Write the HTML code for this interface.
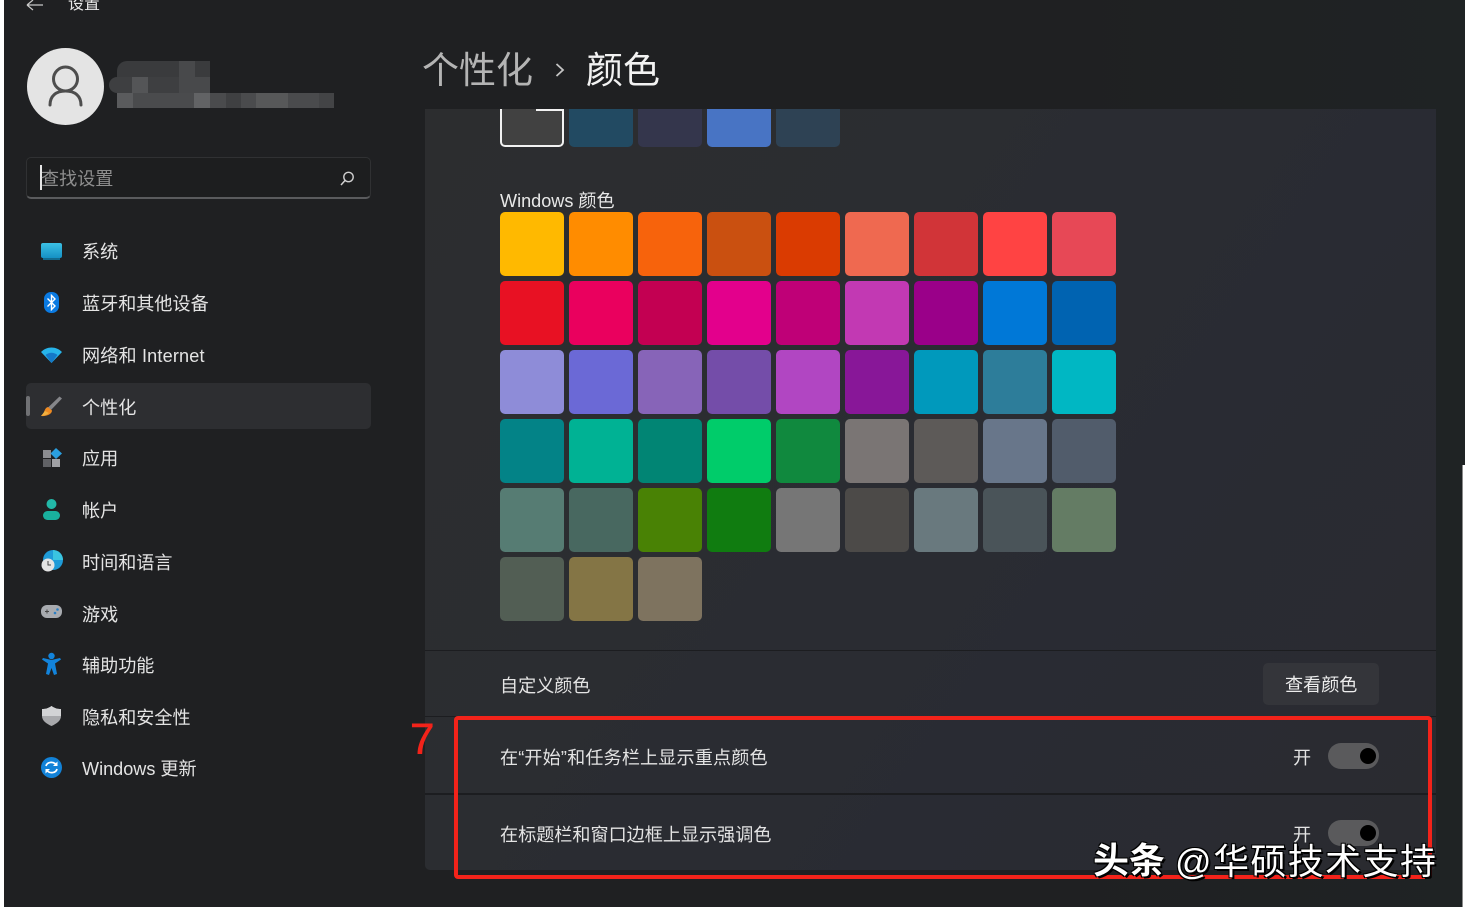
<!DOCTYPE html>
<html lang="zh"><head><meta charset="utf-8"><style>
html,body{margin:0;padding:0;background:#fff}
body{width:1465px;height:907px;position:relative;overflow:hidden;font-family:"Liberation Sans","Noto Sans CJK SC",sans-serif;color:#e6e6e6}
.a{position:absolute}
.t{position:absolute;white-space:nowrap;font-size:18.1px;line-height:24px;font-family:"Liberation Sans","Noto Sans CJK SC",sans-serif}
.s{position:absolute;width:64.3px;height:64.3px;border-radius:5px}
.n{left:82px;color:#e4e4e4}
.l{letter-spacing:.17px}
svg{position:absolute;overflow:visible}
</style></head><body>
<div class="a" style="left:4px;top:0;width:1461px;height:907px;background:linear-gradient(90deg,#1f2022 0%,#1f2022 70%,#1f2324 100%)"></div>
<div class="a" style="left:1463px;top:465px;width:2px;height:442px;background:#fff"></div>
<div class="a" style="left:1462px;top:465px;width:1px;height:442px;background:#8a8a8a"></div>

<svg style="left:26px;top:0" width="18" height="12"><path d="M1 5H17M1 5L7 0M1 5L7 10" fill="none" stroke="#c8c8c8" stroke-width="1.2"/></svg>
<div class="t" style="left:68px;top:-7px;font-size:16px;color:#e8e8e8">设置</div>

<div class="a" style="left:27px;top:48px;width:77px;height:77px;border-radius:50%;background:#e4e4e4"></div>
<svg style="left:27px;top:48px" width="77" height="77"><circle cx="38.500" cy="31" r="12" fill="none" stroke="#4d4d4d" stroke-width="3"/><path d="M23 57C23 48 29 43 38.500 43S54 48 54 57" fill="none" stroke="#4d4d4d" stroke-width="3" stroke-linecap="round"/></svg>

<div class="a" style="left:117px;top:61px;width:93px;height:16px;background:#3a3b3d;border-radius:10px 0 0 0"></div>
<div class="a" style="left:179px;top:61px;width:16px;height:16px;background:#48494b"></div>
<div class="a" style="left:109px;top:77px;width:101px;height:16px;background:#3e3f41;border-radius:8px 0 0 8px"></div>
<div class="a" style="left:132px;top:77px;width:16px;height:16px;background:#545557"></div>
<div class="a" style="left:179px;top:77px;width:31px;height:16px;background:#48494b"></div>
<div class="a" style="left:117px;top:93px;width:217px;height:15px;background:#4a4b4d"></div>
<div class="a" style="left:117px;top:93px;width:16px;height:15px;background:#5a5b5d"></div>
<div class="a" style="left:194px;top:93px;width:16px;height:15px;background:#626365"></div>
<div class="a" style="left:226px;top:93px;width:15px;height:15px;background:#3f4042"></div>
<div class="a" style="left:256px;top:93px;width:32px;height:15px;background:#575859"></div>
<div class="a" style="left:319px;top:93px;width:15px;height:15px;background:#434446"></div>

<div class="a" style="left:26px;top:157px;width:345px;height:42px;box-sizing:border-box;background:#1d1e1f;border:1px solid #303133;border-bottom:2px solid #5a5b5d;border-radius:5px"></div>
<div class="a" style="left:40px;top:165px;width:2px;height:25px;background:#e6e6e6"></div>
<div class="t" style="left:41px;top:167px;color:#8e8e8e">查找设置</div>
<svg style="left:340px;top:171px" width="15" height="15"><circle cx="8.500" cy="6" r="4.700" fill="none" stroke="#d0d0d0" stroke-width="1.400"/><path d="M5 9.500L1 14" stroke="#d0d0d0" stroke-width="1.500"/></svg>

<div class="a" style="left:26px;top:383px;width:345px;height:46px;background:#2d2e31;border-radius:5px"></div>
<div class="a" style="left:26px;top:396px;width:4px;height:20px;background:#707174;border-radius:2px"></div>

<div class="a" style="left:41px;top:243px;width:21px;height:15px;background:linear-gradient(#3bc0e4,#1590c4);border-radius:2px"></div>
<div class="a" style="left:43px;top:258px;width:17px;height:2px;background:#126a8e"></div>
<svg style="left:44px;top:292px" width="15" height="21"><rect width="15" height="21" rx="7" fill="#0a7ae2"/><path d="M3.500 6.500L11 14L7.500 17.500V3.500L11 7L3.500 14.500" fill="none" stroke="#fff" stroke-width="1.400"/></svg>
<svg style="left:41px;top:347px" width="21" height="16"><path d="M0 5C6 -1 15 -1 21 5L10.500 16Z" fill="#27b4ea"/><path d="M4.500 8C8 5 13 5 16.500 8L10.500 16Z" fill="#1478c8"/></svg>
<svg style="left:41px;top:395px" width="21" height="22"><path d="M18.500 1.500L21 3.500L10 15L7 12.500Z" fill="#85868a"/><path d="M7 12C3 13 4 18 0 21C6 21.500 11 19 11 15.500Z" fill="#ee8a22"/><path d="M0 21C3 20.500 6 20 8 18L4 16Z" fill="#f0b040"/></svg>
<svg style="left:42px;top:448px" width="21" height="20"><rect x="1" y="2" width="8" height="8" fill="#8b8c90"/><rect x="1" y="11" width="8" height="8" fill="#606165"/><rect x="10" y="11" width="8" height="8" fill="#a0a1a5"/><path d="M14 0L20 5.500L14 11L8.500 5.500Z" fill="#2a9fe0"/></svg>
<svg style="left:43px;top:499px" width="17" height="21"><circle cx="8.500" cy="5" r="5" fill="#22b8a8"/><rect y="12" width="17" height="9" rx="4.500" fill="#19b09e"/></svg>
<svg style="left:41px;top:550px" width="22" height="22"><circle cx="12" cy="10" r="10" fill="#1f9bd8"/><path d="M12 0A10 10 0 0 1 22 10H12Z" fill="#3ac4e0"/><circle cx="7" cy="15" r="6.500" fill="#e4e4e4"/><path d="M7 11V15H10" fill="none" stroke="#444" stroke-width="1"/></svg>
<svg style="left:41px;top:605px" width="21" height="14"><rect width="21" height="13" rx="6" fill="#a8abb0"/><path d="M4 6.500H8M6 4.500V8.500" stroke="#444" stroke-width="1"/><circle cx="14" cy="8" r="1.300" fill="#2b7fc4"/><circle cx="16.500" cy="4.500" r="1.300" fill="#2b7fc4"/></svg>
<svg style="left:42px;top:653px" width="19" height="22"><circle cx="9.500" cy="3" r="3.200" fill="#1284dc"/><path d="M0 6.500L1 5L9.500 7L18 5L19 6.500L13 10.500L15 21L12 22L9.500 15L7 22L4 21L6 10.500Z" fill="#1284dc"/></svg>
<svg style="left:42px;top:706px" width="19" height="20"><path d="M9.500 0C6 2.500 3.500 3 0 3V10C0 15 5 18 9.500 20C14 18 19 15 19 10V3C15.500 3 13 2.500 9.500 0Z" fill="#a8a9ac"/><path d="M9.500 0C6 2.500 3.500 3 0 3V10H19V3C15.500 3 13 2.500 9.500 0Z" fill="#d2d3d5"/></svg>
<svg style="left:41px;top:757px" width="21" height="21"><circle cx="10.500" cy="10.500" r="10.500" fill="#1282d8"/><path d="M5 9C6 5 12 4 15 7.500M16 12C15 16 9 17 6 13.500" fill="none" stroke="#fff" stroke-width="1.700"/><path d="M16.500 4.500V9H12Z M4.500 16.500V12H9Z" fill="#fff"/></svg>

<div class="t n" style="top:240px">系统</div>
<div class="t n" style="top:292px">蓝牙和其他设备</div>
<div class="t n l" style="top:344px">网络和 Internet</div>
<div class="t n" style="top:396px">个性化</div>
<div class="t n" style="top:447px">应用</div>
<div class="t n" style="top:499px">帐户</div>
<div class="t n" style="top:551px">时间和语言</div>
<div class="t n" style="top:603px">游戏</div>
<div class="t n" style="top:654px">辅助功能</div>
<div class="t n" style="top:706px">隐私和安全性</div>
<div class="t n" style="top:757px">Windows 更新</div>

<div class="t" style="left:422px;top:46px;font-size:37px;line-height:50px;color:#b4b4b4">个性化</div>
<svg style="left:555px;top:63px" width="10" height="14"><path d="M1.500 1L8 7L1.500 13" fill="none" stroke="#c4c4c4" stroke-width="1.800"/></svg>
<div class="t" style="left:586px;top:46px;font-size:37px;line-height:50px;color:#f2f2f2">颜色</div>

<div class="a" style="left:425px;top:109px;width:1011px;height:761px;border-radius:0 0 5px 5px;background:linear-gradient(125deg,#2c2d2f 0%,#2b2d31 35%,#292b33 65%,#2a2b30 100%)"></div>

<div class="a" style="left:500px;top:109px;width:64.300px;height:38px;box-sizing:border-box;background:#414141;border:2px solid #f2f2f2;border-top:0;border-radius:0 0 5px 5px"></div>
<div class="a" style="left:536px;top:109px;width:28.300px;height:2px;background:#f2f2f2"></div>
<div class="a" style="left:569px;top:109px;width:64.300px;height:38px;background:#224a62;border-radius:0 0 5px 5px"></div>
<div class="a" style="left:638px;top:109px;width:64.300px;height:38px;background:#34364c;border-radius:0 0 5px 5px"></div>
<div class="a" style="left:707px;top:109px;width:64.300px;height:38px;background:#4874c4;border-radius:0 0 5px 5px"></div>
<div class="a" style="left:776px;top:109px;width:64.300px;height:38px;background:#2e4254;border-radius:0 0 5px 5px"></div>

<div class="t" style="left:500px;top:189px;color:#e8e8e8">Windows 颜色</div>

<div class="s" style="left:500px;top:212px;background:#ffb900"></div>
<div class="s" style="left:569px;top:212px;background:#ff8c00"></div>
<div class="s" style="left:638px;top:212px;background:#f7630c"></div>
<div class="s" style="left:707px;top:212px;background:#ca5010"></div>
<div class="s" style="left:776px;top:212px;background:#da3b01"></div>
<div class="s" style="left:845px;top:212px;background:#ef6950"></div>
<div class="s" style="left:914px;top:212px;background:#d13438"></div>
<div class="s" style="left:983px;top:212px;background:#ff4343"></div>
<div class="s" style="left:1052px;top:212px;background:#e74856"></div>

<div class="s" style="left:500px;top:281px;background:#e81123"></div>
<div class="s" style="left:569px;top:281px;background:#ea005e"></div>
<div class="s" style="left:638px;top:281px;background:#c30052"></div>
<div class="s" style="left:707px;top:281px;background:#e3008c"></div>
<div class="s" style="left:776px;top:281px;background:#bf0077"></div>
<div class="s" style="left:845px;top:281px;background:#c239b3"></div>
<div class="s" style="left:914px;top:281px;background:#9a0089"></div>
<div class="s" style="left:983px;top:281px;background:#0078d7"></div>
<div class="s" style="left:1052px;top:281px;background:#0063b1"></div>

<div class="s" style="left:500px;top:350px;background:#8e8cd8"></div>
<div class="s" style="left:569px;top:350px;background:#6b69d6"></div>
<div class="s" style="left:638px;top:350px;background:#8764b8"></div>
<div class="s" style="left:707px;top:350px;background:#744da9"></div>
<div class="s" style="left:776px;top:350px;background:#b146c2"></div>
<div class="s" style="left:845px;top:350px;background:#881798"></div>
<div class="s" style="left:914px;top:350px;background:#0099bc"></div>
<div class="s" style="left:983px;top:350px;background:#2d7d9a"></div>
<div class="s" style="left:1052px;top:350px;background:#00b7c3"></div>

<div class="s" style="left:500px;top:419px;background:#038387"></div>
<div class="s" style="left:569px;top:419px;background:#00b294"></div>
<div class="s" style="left:638px;top:419px;background:#018574"></div>
<div class="s" style="left:707px;top:419px;background:#00cc6a"></div>
<div class="s" style="left:776px;top:419px;background:#10893e"></div>
<div class="s" style="left:845px;top:419px;background:#7a7574"></div>
<div class="s" style="left:914px;top:419px;background:#5d5a58"></div>
<div class="s" style="left:983px;top:419px;background:#68768a"></div>
<div class="s" style="left:1052px;top:419px;background:#515c6b"></div>

<div class="s" style="left:500px;top:488px;background:#567c73"></div>
<div class="s" style="left:569px;top:488px;background:#486860"></div>
<div class="s" style="left:638px;top:488px;background:#498205"></div>
<div class="s" style="left:707px;top:488px;background:#107c10"></div>
<div class="s" style="left:776px;top:488px;background:#767676"></div>
<div class="s" style="left:845px;top:488px;background:#4c4a48"></div>
<div class="s" style="left:914px;top:488px;background:#69797e"></div>
<div class="s" style="left:983px;top:488px;background:#4a5459"></div>
<div class="s" style="left:1052px;top:488px;background:#647c64"></div>

<div class="s" style="left:500px;top:557px;background:#525e54"></div>
<div class="s" style="left:569px;top:557px;background:#847545"></div>
<div class="s" style="left:638px;top:557px;background:#7e735f"></div>

<div class="a" style="left:425px;top:650px;width:1011px;height:1px;background:#1c1d20"></div>
<div class="a" style="left:425px;top:716px;width:1011px;height:1px;background:#1c1d20"></div>
<div class="a" style="left:425px;top:793px;width:1011px;height:2px;background:#1c1d20"></div>

<div class="t" style="left:500px;top:674px;color:#e4e4e4">自定义颜色</div>
<div class="a" style="left:1263px;top:663px;width:116px;height:42px;background:#34353a;border-radius:5px"></div>
<div class="t" style="left:1285px;top:673px;color:#ededed">查看颜色</div>

<div class="t" style="left:500px;top:746px;color:#e4e4e4;letter-spacing:.15px">在“开始”和任务栏上显示重点颜色</div>
<div class="t" style="left:1293px;top:746px;color:#e4e4e4">开</div>
<div class="a" style="left:1328px;top:743px;width:51px;height:26px;background:#5a5a5c;border-radius:13px"></div>
<div class="a" style="left:1360px;top:748px;width:16px;height:16px;background:#000;border-radius:50%"></div>

<div class="t" style="left:500px;top:823px;color:#e4e4e4">在标题栏和窗口边框上显示强调色</div>
<div class="t" style="left:1293px;top:823px;color:#e4e4e4">开</div>
<div class="a" style="left:1328px;top:820px;width:51px;height:26px;background:#5a5a5c;border-radius:13px"></div>
<div class="a" style="left:1360px;top:825px;width:16px;height:16px;background:#000;border-radius:50%"></div>

<div class="a" style="left:454px;top:716px;width:978px;height:163px;box-sizing:border-box;border:4px solid #f3231a;border-radius:4px"></div>
<div class="t" style="left:410px;top:715px;font-size:44px;line-height:50px;color:#f3231a;-webkit-text-stroke:.6px #f3231a">7</div>

<div class="t" style="left:1093px;top:836px;font-size:36px;line-height:50px;font-weight:700;color:#fff;text-shadow:2px 2px 0 #000,-1px -1px 0 #000,1px -1px 0 #000,-1px 1px 0 #000">头条</div>
<div class="t" style="left:1175px;top:837px;font-size:36px;line-height:50px;letter-spacing:1.4px;color:#fff;text-shadow:2px 2px 0 #000,-1px -1px 0 #000,1px -1px 0 #000,-1px 1px 0 #000">@华硕技术支持</div>
</body></html>
